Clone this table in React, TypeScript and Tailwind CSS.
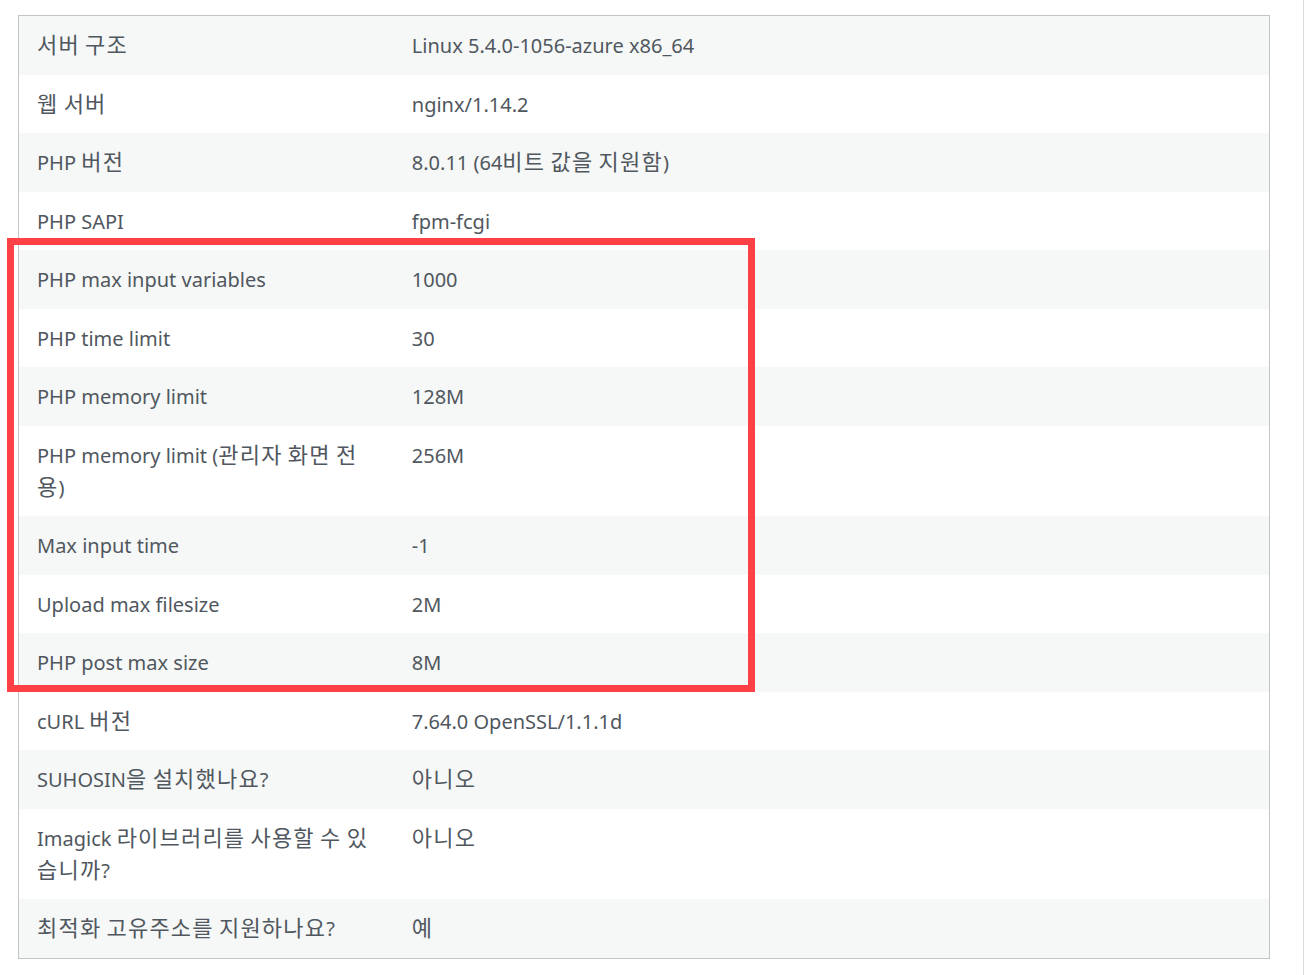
const rows: [string, string][] = [
  ["서버 구조", "Linux 5.4.0-1056-azure x86_64"],
  ["웹 서버", "nginx/1.14.2"],
  ["PHP 버전", "8.0.11 (64비트 값을 지원함)"],
  ["PHP SAPI", "fpm-fcgi"],
  ["PHP max input variables", "1000"],
  ["PHP time limit", "30"],
  ["PHP memory limit", "128M"],
  ["PHP memory limit (관리자 화면 전용)", "256M"],
  ["Max input time", "-1"],
  ["Upload max filesize", "2M"],
  ["PHP post max size", "8M"],
  ["cURL 버전", "7.64.0 OpenSSL/1.1.1d"],
  ["SUHOSIN을 설치했나요?", "아니오"],
  ["Imagick 라이브러리를 사용할 수 있습니까?", "아니오"],
  ["최적화 고유주소를 지원하나요?", "예"],
];

// Hangul runs get a slightly bigger size so they take the width of the original font
function Mixed({ text }: { text: string }) {
  const parts = text.split(/([\uAC00-\uD7A3\u3131-\u318E]+)/);
  return (
    <>
      {parts.map((p, i) =>
        i % 2 === 1 ? (
          <span key={i} className="text-[22px] leading-[20px] tracking-[1.2px]">
            {p}
          </span>
        ) : (
          p
        )
      )}
    </>
  );
}

export default function App() {
  return (
    <div className="relative min-h-[975px] w-[1304px] border-r border-[#dcdcde] bg-white pl-[18px] pt-[15px] font-['Noto_Sans','Noto_Sans_CJK_KR',sans-serif] text-[20px] text-[#50575e]">
      <table className="w-[1252px] table-fixed border-collapse border border-[#c3c4c7]">
        <colgroup>
          <col className="w-[30%]" />
          <col />
        </colgroup>
        <tbody>
          {rows.map(([label, value], i) => (
            <tr key={label} className={i % 2 === 0 ? "bg-[#f6f7f7]" : "bg-white"}>
              <td className="h-[58.5px] px-[18px] pt-[14px] pb-[12.5px] align-top leading-[32px]">
                <Mixed text={label} />
              </td>
              <td className="h-[58.5px] px-[18px] pt-[14px] pb-[12.5px] align-top leading-[32px]">
                <Mixed text={value} />
              </td>
            </tr>
          ))}
        </tbody>
      </table>
      <div className="pointer-events-none absolute left-[7px] top-[238px] h-[454px] w-[748px] border-[7px] border-[#fd4146]" />
    </div>
  );
}
